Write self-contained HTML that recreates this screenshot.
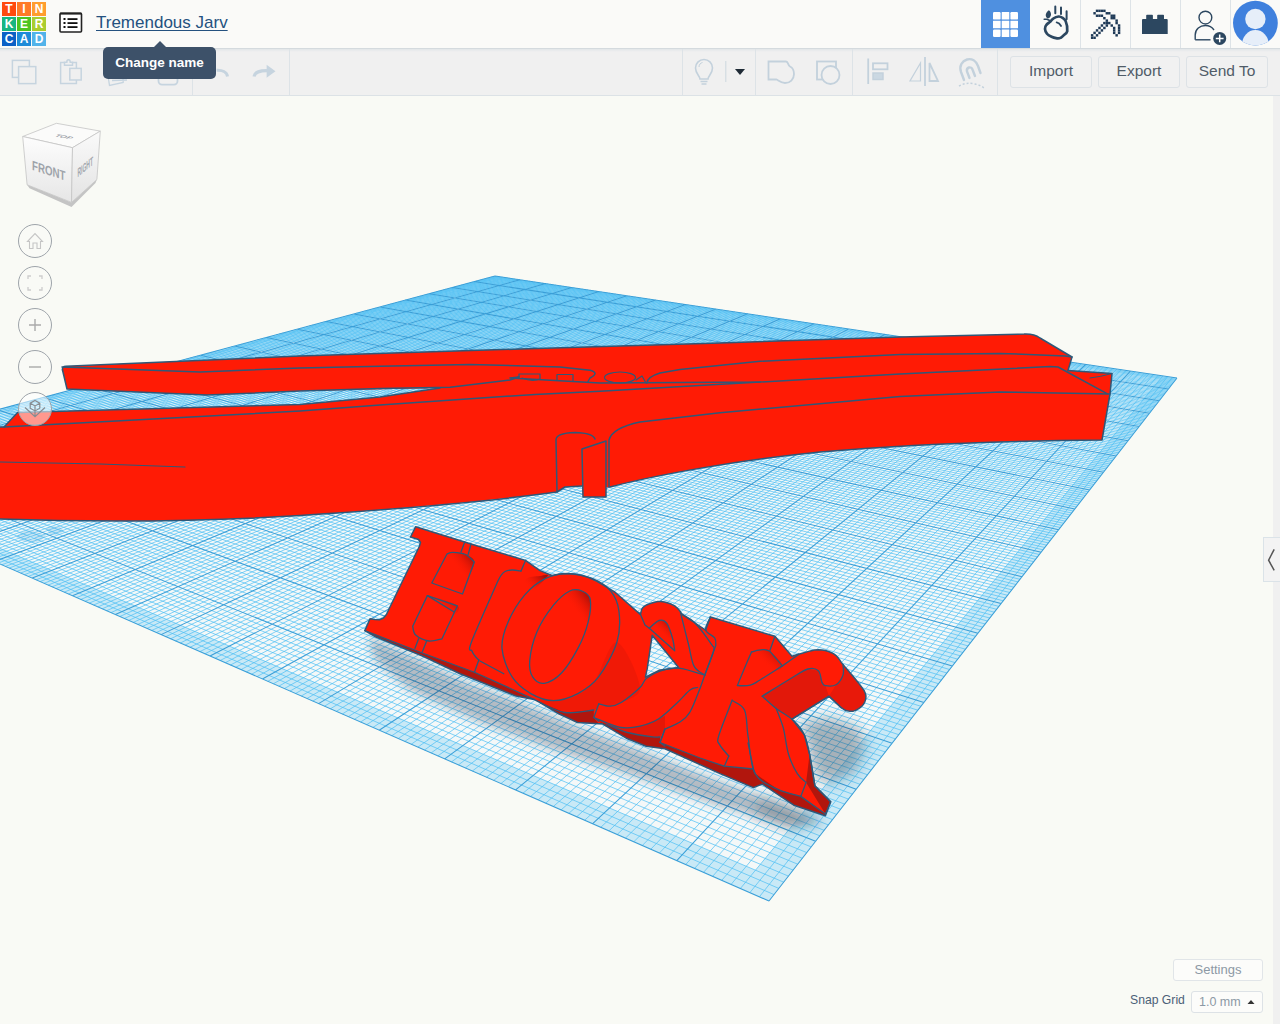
<!DOCTYPE html>
<html><head><meta charset="utf-8">
<style>
html,body{margin:0;padding:0;width:1280px;height:1024px;overflow:hidden;background:#f9faf5;font-family:"Liberation Sans",sans-serif;}
#scene{position:absolute;left:0;top:0;width:1280px;height:1024px;}
#hdr{position:absolute;left:0;top:0;width:1280px;height:48px;background:#fafaf8;border-bottom:1px solid #d4dade;}
#tb{position:absolute;left:0;top:49px;width:1280px;height:46px;background:#f0f0f0;border-bottom:1px solid #dce2e6;background-image:linear-gradient(#e2e6e9,#f0f0f0 3px);}
.tile{position:absolute;width:14px;height:14px;color:#fff;font-weight:bold;font-size:12px;line-height:14px;text-align:center;}
#title{position:absolute;left:96px;top:13px;font-size:17px;color:#24517f;text-decoration:underline;text-decoration-thickness:1px;text-underline-offset:2px;white-space:nowrap;}
.sep{position:absolute;top:49px;width:1px;height:46px;background:#dde3e7;}
.hsep{position:absolute;top:0;width:1px;height:48px;background:#dde3e7;}
.btn{position:absolute;top:56px;height:30px;border:1px solid #dde2e6;border-radius:3px;background:#f1f1f1;color:#505c68;font-size:15.5px;line-height:28px;text-align:center;}
#tip{position:absolute;left:103px;top:47px;width:113px;height:32px;background:#3d5169;border-radius:5px;color:#fff;font-weight:bold;font-size:13.5px;line-height:31px;text-align:center;}
#tiparrow{position:absolute;left:153px;top:41px;width:0;height:0;border-left:7px solid transparent;border-right:7px solid transparent;border-bottom:7px solid #3d5169;}
#strip{position:absolute;left:1273px;top:96px;width:7px;height:928px;background:#f0f0f0;}
#tab{position:absolute;left:1263px;top:537px;width:17px;height:45px;background:#f3f3f3;border:1px solid #dbe3e8;border-right:none;box-sizing:border-box;}
#settings{position:absolute;left:1173px;top:959px;width:88px;height:20px;border:1px solid #e1e5e8;border-radius:3px;background:#fcfcfa;color:#8c99a5;font-size:13px;line-height:20px;text-align:center;}
#snaplbl{position:absolute;left:1130px;top:993px;font-size:12.2px;color:#4b6077;}
#snap{position:absolute;left:1191px;top:991px;width:70px;height:20px;border:1px solid #dde2e6;border-radius:3px;background:#fcfcfa;color:#8c99a5;font-size:12.5px;line-height:20px;}
</style></head><body>
<svg id="scene" width="1280" height="1024" viewBox="0 0 1280 1024">
<defs><filter id="blur7" x="-30%" y="-30%" width="160%" height="160%"><feGaussianBlur stdDeviation="7"/></filter><filter id="blur5" x="-20%" y="-20%" width="140%" height="140%"><feGaussianBlur stdDeviation="5"/></filter></defs><polygon points="495.0,276.0 1177.0,378.0 769.0,901.0 -219.0,468.0" fill="#f4f8f8"/>
<path d="M495.0,276.0 L1177.0,378.0 L769.0,901.0 L-219.0,468.0 Z M496.2,278.8 L-192.9,466.3 L755.5,870.2 L1160.2,379.1 Z" fill="#c9e9f6" fill-rule="evenodd"/>
<path d="M497.5,276.4L-216.5,469.1M492.9,276.6L1176.2,379.1M499.9,276.7L-213.9,470.2M490.9,277.1L1175.3,380.1M502.4,277.1L-211.4,471.3M488.8,277.7L1174.5,381.2M504.9,277.5L-208.8,472.5M486.7,278.2L1173.6,382.3M507.4,277.8L-206.2,473.6M484.6,278.8L1172.8,383.4M509.8,278.2L-203.6,474.7M482.5,279.4L1171.9,384.5M512.3,278.6L-201.0,475.9M480.4,279.9L1171.0,385.6M514.8,279.0L-198.4,477.0M478.3,280.5L1170.2,386.8M517.4,279.3L-195.7,478.2M476.2,281.1L1169.3,387.9M522.4,280.1L-190.4,480.5M471.9,282.2L1167.5,390.1M524.9,280.5L-187.8,481.7M469.7,282.8L1166.6,391.3M527.5,280.9L-185.1,482.9M467.6,283.4L1165.7,392.4M530.0,281.2L-182.4,484.1M465.4,284.0L1164.8,393.6M532.6,281.6L-179.6,485.2M463.2,284.5L1163.9,394.8M535.2,282.0L-176.9,486.4M461.0,285.1L1163.0,395.9M537.7,282.4L-174.2,487.6M458.8,285.7L1162.1,397.1M540.3,282.8L-171.4,488.9M456.6,286.3L1161.2,398.3M542.9,283.2L-168.6,490.1M454.4,286.9L1160.2,399.5M548.1,283.9L-163.1,492.5M449.9,288.1L1158.3,401.9M550.7,284.3L-160.2,493.8M447.7,288.7L1157.4,403.1M553.3,284.7L-157.4,495.0M445.4,289.3L1156.4,404.4M555.9,285.1L-154.6,496.2M443.1,289.9L1155.5,405.6M558.6,285.5L-151.7,497.5M440.9,290.6L1154.5,406.8M561.2,285.9L-148.8,498.8M438.6,291.2L1153.5,408.1M563.8,286.3L-145.9,500.0M436.3,291.8L1152.5,409.3M566.5,286.7L-143.0,501.3M433.9,292.4L1151.6,410.6M569.2,287.1L-140.1,502.6M431.6,293.0L1150.6,411.9M574.5,287.9L-134.2,505.1M426.9,294.3L1148.6,414.5M577.2,288.3L-131.3,506.4M424.6,294.9L1147.5,415.8M579.9,288.7L-128.3,507.8M422.2,295.6L1146.5,417.1M582.6,289.1L-125.3,509.1M419.8,296.2L1145.5,418.4M585.3,289.5L-122.3,510.4M417.4,296.9L1144.5,419.7M588.0,289.9L-119.2,511.7M415.1,297.5L1143.4,421.0M590.7,290.3L-116.2,513.1M412.6,298.1L1142.4,422.4M593.5,290.7L-113.1,514.4M410.2,298.8L1141.3,423.7M596.2,291.1L-110.1,515.7M407.8,299.5L1140.3,425.1M601.7,292.0L-103.9,518.5M402.9,300.8L1138.1,427.8M604.5,292.4L-100.7,519.8M400.4,301.4L1137.0,429.2M607.3,292.8L-97.6,521.2M397.9,302.1L1135.9,430.6M610.0,293.2L-94.4,522.6M395.4,302.8L1134.8,432.0M612.8,293.6L-91.2,524.0M392.9,303.4L1133.7,433.4M615.6,294.0L-88.0,525.4M390.4,304.1L1132.6,434.9M618.4,294.5L-84.8,526.8M387.9,304.8L1131.5,436.3M621.3,294.9L-81.6,528.2M385.4,305.5L1130.4,437.8M624.1,295.3L-78.3,529.7M382.8,306.2L1129.2,439.2M629.8,296.2L-71.8,532.5M377.7,307.5L1127.0,442.2M632.6,296.6L-68.5,534.0M375.1,308.2L1125.8,443.6M635.5,297.0L-65.1,535.4M372.5,308.9L1124.6,445.1M638.3,297.4L-61.8,536.9M369.9,309.6L1123.4,446.6M641.2,297.9L-58.4,538.4M367.3,310.3L1122.3,448.2M644.1,298.3L-55.1,539.9M364.6,311.1L1121.1,449.7M647.0,298.7L-51.6,541.3M362.0,311.8L1119.9,451.2M649.9,299.2L-48.2,542.8M359.3,312.5L1118.7,452.8M652.8,299.6L-44.8,544.3M356.6,313.2L1117.4,454.3M658.7,300.5L-37.8,547.4M351.2,314.7L1115.0,457.5M661.6,300.9L-34.3,548.9M348.5,315.4L1113.7,459.1M664.5,301.4L-30.8,550.5M345.8,316.1L1112.5,460.7M667.5,301.8L-27.3,552.0M343.1,316.9L1111.2,462.3M670.5,302.2L-23.7,553.6M340.3,317.6L1109.9,464.0M673.4,302.7L-20.1,555.1M337.5,318.3L1108.7,465.6M676.4,303.1L-16.5,556.7M334.8,319.1L1107.4,467.3M679.4,303.6L-12.9,558.3M332.0,319.8L1106.1,468.9M682.4,304.0L-9.3,559.9M329.2,320.6L1104.8,470.6M688.5,304.9L-1.9,563.1M323.5,322.1L1102.1,474.0M691.5,305.4L1.8,564.8M320.6,322.9L1100.8,475.7M694.5,305.8L5.5,566.4M317.8,323.7L1099.4,477.4M697.6,306.3L9.3,568.0M314.9,324.4L1098.1,479.2M700.6,306.8L13.0,569.7M312.0,325.2L1096.7,480.9M703.7,307.2L16.8,571.4M309.1,326.0L1095.3,482.7M706.8,307.7L20.7,573.0M306.2,326.8L1093.9,484.5M709.9,308.1L24.5,574.7M303.2,327.6L1092.5,486.3M713.0,308.6L28.4,576.4M300.3,328.4L1091.1,488.1M719.2,309.5L36.2,579.8M294.3,330.0L1088.2,491.8M722.3,310.0L40.1,581.6M291.3,330.8L1086.8,493.6M725.5,310.5L44.1,583.3M288.3,331.6L1085.3,495.5M728.6,310.9L48.1,585.1M285.2,332.4L1083.9,497.4M731.8,311.4L52.1,586.8M282.2,333.2L1082.4,499.3M734.9,311.9L56.1,588.6M279.1,334.0L1080.9,501.2M738.1,312.4L60.2,590.4M276.1,334.9L1079.4,503.1M741.3,312.8L64.3,592.1M273.0,335.7L1077.9,505.1M744.5,313.3L68.4,594.0M269.8,336.5L1076.3,507.0M750.9,314.3L76.7,597.6M263.6,338.2L1073.2,511.0M754.1,314.8L80.9,599.4M260.4,339.1L1071.7,513.0M757.4,315.2L85.1,601.3M257.2,339.9L1070.1,515.0M760.6,315.7L89.3,603.1M254.0,340.8L1068.5,517.1M763.9,316.2L93.6,605.0M250.8,341.7L1066.9,519.1M767.2,316.7L97.9,606.9M247.6,342.5L1065.3,521.2M770.5,317.2L102.2,608.8M244.3,343.4L1063.7,523.3M773.7,317.7L106.6,610.7M241.1,344.3L1062.0,525.4M777.0,318.2L111.0,612.6M237.8,345.2L1060.3,527.5M783.7,319.2L119.8,616.5M231.2,346.9L1057.0,531.8M787.0,319.7L124.3,618.5M227.8,347.8L1055.3,534.0M790.4,320.2L128.8,620.4M224.5,348.7L1053.6,536.2M793.7,320.7L133.3,622.4M221.1,349.6L1051.8,538.4M797.1,321.2L137.9,624.4M217.7,350.6L1050.1,540.7M800.5,321.7L142.5,626.4M214.3,351.5L1048.3,542.9M803.9,322.2L147.1,628.4M210.9,352.4L1046.6,545.2M807.3,322.7L151.7,630.5M207.4,353.3L1044.8,547.5M810.7,323.2L156.4,632.5M204.0,354.3L1043.0,549.8M817.5,324.2L165.8,636.7M197.0,356.1L1039.3,554.5M821.0,324.8L170.6,638.8M193.5,357.1L1037.4,556.9M824.4,325.3L175.4,640.9M189.9,358.0L1035.6,559.3M827.9,325.8L180.3,643.0M186.3,359.0L1033.7,561.7M831.4,326.3L185.1,645.1M182.8,360.0L1031.8,564.2M834.9,326.8L190.0,647.3M179.2,360.9L1029.9,566.6M838.4,327.4L195.0,649.4M175.5,361.9L1027.9,569.1M841.9,327.9L199.9,651.6M171.9,362.9L1026.0,571.6M845.4,328.4L204.9,653.8M168.2,363.9L1024.0,574.1M852.5,329.5L215.1,658.2M160.8,365.9L1020.0,579.3M856.1,330.0L220.2,660.5M157.1,366.9L1017.9,581.9M859.7,330.5L225.3,662.7M153.3,367.9L1015.9,584.5M863.3,331.1L230.5,665.0M149.6,368.9L1013.8,587.2M866.9,331.6L235.7,667.3M145.8,369.9L1011.7,589.8M870.5,332.2L241.0,669.6M142.0,370.9L1009.6,592.5M874.1,332.7L246.3,671.9M138.1,372.0L1007.5,595.3M877.7,333.2L251.6,674.2M134.3,373.0L1005.4,598.0M881.4,333.8L257.0,676.6M130.4,374.1L1003.2,600.8M888.7,334.9L267.8,681.3M122.5,376.2L998.8,606.4M892.4,335.4L273.3,683.8M118.6,377.2L996.6,609.3M896.1,336.0L278.8,686.2M114.6,378.3L994.3,612.2M899.8,336.5L284.4,688.6M110.6,379.4L992.0,615.1M903.6,337.1L290.0,691.1M106.6,380.5L989.7,618.0M907.3,337.7L295.6,693.5M102.5,381.5L987.4,621.0M911.1,338.2L301.3,696.0M98.5,382.6L985.1,624.0M914.8,338.8L307.0,698.5M94.4,383.7L982.7,627.1M918.6,339.4L312.8,701.1M90.2,384.8L980.3,630.1M926.2,340.5L324.5,706.2M81.9,387.1L975.5,636.3M930.0,341.1L330.4,708.8M77.7,388.2L973.0,639.5M933.9,341.6L336.3,711.4M73.5,389.3L970.5,642.7M937.7,342.2L342.3,714.0M69.2,390.5L968.0,645.9M941.6,342.8L348.4,716.6M65.0,391.6L965.4,649.2M945.4,343.4L354.4,719.3M60.7,392.8L962.9,652.5M949.3,343.9L360.6,722.0M56.3,394.0L960.3,655.8M953.2,344.5L366.7,724.7M52.0,395.1L957.7,659.2M957.1,345.1L373.0,727.4M47.6,396.3L955.0,662.6M965.0,346.3L385.5,732.9M38.7,398.7L949.6,669.5M969.0,346.9L391.9,735.7M34.3,399.9L946.9,673.0M972.9,347.5L398.3,738.5M29.8,401.1L944.1,676.5M976.9,348.1L404.8,741.4M25.3,402.3L941.3,680.1M980.9,348.7L411.3,744.2M20.7,403.5L938.5,683.7M984.9,349.3L417.9,747.1M16.1,404.8L935.7,687.4M989.0,349.9L424.5,750.0M11.5,406.0L932.8,691.1M993.0,350.5L431.2,752.9M6.9,407.3L929.8,694.8M997.1,351.1L437.9,755.9M2.2,408.5L926.9,698.6M1005.2,352.3L451.5,761.9M-7.2,411.0L920.9,706.3M1009.3,352.9L458.4,764.9M-12.0,412.3L917.8,710.2M1013.4,353.5L465.4,767.9M-16.8,413.6L914.7,714.2M1017.6,354.2L472.4,771.0M-21.6,414.9L911.6,718.2M1021.7,354.8L479.4,774.1M-26.4,416.2L908.5,722.2M1025.9,355.4L486.5,777.2M-31.3,417.5L905.3,726.3M1030.0,356.0L493.7,780.4M-36.2,418.9L902.0,730.5M1034.2,356.6L501.0,783.5M-41.2,420.2L898.8,734.7M1038.4,357.3L508.2,786.7M-46.2,421.5L895.4,738.9M1046.9,358.5L523.0,793.2M-56.3,424.2L888.7,747.6M1051.2,359.2L530.5,796.5M-61.3,425.6L885.3,752.0M1055.4,359.8L538.1,799.8M-66.5,427.0L881.8,756.4M1059.7,360.5L545.7,803.1M-71.6,428.4L878.3,760.9M1064.0,361.1L553.3,806.5M-76.8,429.8L874.7,765.5M1068.3,361.7L561.1,809.9M-82.0,431.2L871.1,770.1M1072.7,362.4L568.9,813.3M-87.3,432.6L867.5,774.8M1077.0,363.0L576.8,816.7M-92.6,434.0L863.8,779.5M1081.4,363.7L584.7,820.2M-97.9,435.4L860.0,784.3M1090.2,365.0L600.8,827.3M-108.7,438.3L852.4,794.1M1094.6,365.7L608.9,830.9M-114.1,439.8L848.5,799.1M1099.0,366.3L617.2,834.5M-119.6,441.3L844.6,804.1M1103.5,367.0L625.5,838.1M-125.1,442.8L840.6,809.2M1107.9,367.7L633.8,841.8M-130.7,444.3L836.6,814.4M1112.4,368.3L642.3,845.5M-136.3,445.8L832.5,819.6M1116.9,369.0L650.8,849.2M-141.9,447.3L828.3,824.9M1121.4,369.7L659.4,853.0M-147.6,448.8L824.1,830.3M1126.0,370.4L668.1,856.8M-153.3,450.3L819.9,835.8M1135.1,371.7L685.7,864.5M-164.9,453.4L811.2,846.9M1139.7,372.4L694.6,868.4M-170.7,455.0L806.8,852.6M1144.3,373.1L703.6,872.3M-176.6,456.6L802.3,858.3M1148.9,373.8L712.7,876.3M-182.5,458.2L797.7,864.2M1153.5,374.5L721.8,880.3M-188.5,459.8L793.1,870.1M1158.2,375.2L731.1,884.4M-194.5,461.4L788.4,876.1M1162.9,375.9L740.4,888.5M-200.6,463.0L783.7,882.2M1167.6,376.6L749.9,892.6M-206.7,464.7L778.8,888.4M1172.3,377.3L759.4,896.8M-212.8,466.3L774.0,894.6" stroke="#4cbff4" stroke-width="0.7" fill="none"/>
<path d="M495.0,276.0L-219.0,468.0M495.0,276.0L1177.0,378.0M519.9,279.7L-193.1,479.4M474.0,281.6L1168.4,389.0M545.5,283.6L-165.9,491.3M452.2,287.5L1159.3,400.7M571.8,287.5L-137.2,503.9M429.3,293.7L1149.6,413.2M599.0,291.5L-107.0,517.1M405.3,300.1L1139.2,426.5M626.9,295.7L-75.1,531.1M380.3,306.9L1128.1,440.7M655.7,300.0L-41.3,545.9M353.9,313.9L1116.2,455.9M685.4,304.5L-5.6,561.5M326.3,321.4L1103.4,472.3M716.1,309.1L32.3,578.1M297.3,329.2L1089.7,489.9M747.7,313.8L72.5,595.8M266.7,337.4L1074.8,509.0M780.4,318.7L115.4,614.5M234.5,346.1L1058.7,529.7M814.1,323.7L161.1,634.6M200.5,355.2L1041.1,552.2M849.0,328.9L210.0,656.0M164.5,364.9L1022.0,576.7M885.1,334.3L262.4,679.0M126.5,375.1L1001.0,603.6M922.4,339.9L318.6,703.6M86.1,386.0L977.9,633.2M961.1,345.7L379.2,730.2M43.2,397.5L952.3,666.0M1001.1,351.7L444.7,758.9M-2.5,409.8L923.9,702.4M1042.7,357.9L515.6,789.9M-51.2,422.9L892.1,743.2M1085.8,364.4L592.7,823.7M-103.3,436.9L856.2,789.2M1130.5,371.0L676.8,860.6M-159.1,451.9L815.6,841.3M1177.0,378.0L769.0,901.0M-219.0,468.0L769.0,901.0" stroke="#3a9fd8" stroke-width="1.05" fill="none"/>
<g id="plane-logo" fill="#3aa2de" opacity="0.22"><path d="M16,537 Q20,531 30,530 L46,535 Q43,541 33,543 L22,541 Z M27,535.5 L36,537.5 L32,539.5 Z" fill-rule="evenodd"/><path d="M46,528 Q52,525 60,527 L64,531 Q58,536 50,535 Z"/></g>
<!-- clothespin -->
<g id="pin">
<path d="M62.5,370 Q62,366.5 66,366.3 L300,356 L520,349 L720,343 L900,337 L1024,334 Q1034,333.5 1040,338 L1072,357 L1068,370.5 L1112,373.5 L1110,394 L1102,440 C1000,441 900,445 820,452 C740,460 660,474 610,487 L606,487.5 L606,497 L583,497 L582,486 L565,487 L557,492 C500,500 400,509 300,515.5 C220,520.5 120,523 0,519 L0,427 L4,427 L17.6,412.5 L300,404.5 L380,397 L440,388 L300,391 L207,395 L67,389 Z" fill="#ff1b05"/>
<g fill="none" stroke="#2f5878" stroke-width="1.5" stroke-linejoin="round" stroke-linecap="round">
<path d="M62.5,370 Q62,366.5 66,366.3 L300,356 L520,349 L720,343 L900,337 L1024,334 Q1034,333.5 1040,338 L1072,357 L1068,370.5"/>
<path d="M1068,370.5 L1112,373.5 L1110,394 L1102,440 C1000,441 900,445 820,452 C740,460 660,474 610,487"/>
<path d="M606,441 L606,497 L583,497 L582,449 Z"/>
<path d="M582,486 L565,487 L557,492 C500,500 400,509 300,515.5 C220,520.5 120,523 0,519"/>
<path d="M0,427 L4,427 L17.6,412.5 L300,404.5 L380,397 L440,388"/>
<path d="M62.5,370 L67,389 L207,395 L300,391 L380,388.5 L450,387.3 L510,380 L519,377"/>
<path d="M62,367 L200,372 L300,368 L380,366.2 L470,364.5 L560,367 L590,370.3 Q600,373 590,378 L588,381.5"/>
<path d="M647,383 Q647,377 660,373 L680,369.4 L760,361.3 L900,354.4 L1000,353.4 L1065,356 L1072,357"/>
<path d="M519,377 L510,378 L600,383 L760,382 L900,374 L1050,366.6 L1058,367 L1107,393.6"/>
<path d="M4,427 L300,411 L380,405 L535,394.4 L600,391.25 L760,382"/>
<path d="M609,487 L609,440 Q612,428 640,422 L720,412.8 L900,396.6 L1000,392 L1110,394"/>
<path d="M557,492 L556,440 Q556,433 575,432.5 Q593,433 595,439"/>
<path d="M0,462 L100,464 L185,467" stroke-width="1.2"/>
<path d="M519,377 L519,374 L540,374 L540,379 Q532,382 522,378 M557,380 L557,374.5 L573,374.5 L573,381" stroke-width="1.2"/>
<ellipse cx="620" cy="377.5" rx="15.5" ry="5.5" stroke-width="1.2"/>
<path d="M636,380 L642,376 L646,383" stroke-width="1.2"/>
<path d="M1112,373.5 Q1100,377 1090,378" stroke-width="1"/>
</g>
</g>
<g filter="url(#blur5)" fill="#1e2e44">
<path opacity="0.30" d="M368,636 L420,660 L470,684 L520,702 L580,728 L640,750 L700,774 L760,796 L822,822 L790,826 L720,806 L640,778 L560,752 L480,722 L410,690 L375,660 Z"/>
</g>
<g filter="url(#blur7)" fill="#1e2e44">
<path opacity="0.36" d="M800,722 L830,718 L858,728 L866,745 L855,772 L828,784 L814,772 L808,745 Z"/>
<path opacity="0.22" d="M760,795 L800,805 L822,822 L790,830 L755,815 Z"/>
</g>
<path d="M415.7,526.7 L464.7,542.0 L471.0,544.0 L525.5,560.4 L540.0,570.6 L552.0,575.5 L554.7,575.0 L558.5,574.3 L562.9,573.7 L567.7,573.6 L572.8,574.0 L578.3,574.8 L584.1,576.1 L590.0,578.0 L596.6,581.2 L603.8,585.3 L610.3,589.3 L614.8,592.0 L640.5,614.6 L640.7,613.4 L641.1,611.6 L641.6,609.6 L642.5,608.0 L643.7,606.8 L645.3,605.7 L647.1,604.7 L649.3,603.9 L651.8,603.0 L654.7,602.2 L657.8,601.6 L661.0,601.5 L664.4,602.0 L668.1,603.0 L671.6,604.3 L674.7,605.9 L677.2,608.0 L679.5,610.5 L681.2,612.9 L682.5,614.6 L695.0,623.0 L706.0,630.3 L705.6,629.9 L710.4,617.0 L774.9,636.3 L792.0,656.2 L792.8,656.0 L793.7,655.6 L795.0,655.2 L796.8,654.7 L799.1,654.1 L802.2,653.2 L806.1,652.1 L810.3,650.9 L814.6,650.1 L818.4,649.7 L821.9,649.9 L825.3,650.5 L828.6,651.5 L831.5,652.7 L834.2,654.1 L836.4,655.8 L838.2,657.9 L839.8,660.1 L841.3,662.4 L843.0,664.6 L844.8,666.7 L846.6,668.8 L848.4,670.8 L850.2,672.9 L852.0,675.0 L853.8,677.2 L855.7,679.5 L857.5,681.8 L859.2,683.9 L860.6,685.7 L861.7,687.2 L862.6,688.4 L863.3,689.4 L864.0,690.4 L864.5,691.5 L865.0,692.6 L865.4,693.7 L865.7,694.7 L865.9,695.8 L865.9,697.0 L865.8,698.3 L865.5,699.6 L865.1,701.0 L864.6,702.3 L864.0,703.5 L863.2,704.6 L862.3,705.7 L861.3,706.7 L860.1,707.7 L859.0,708.5 L857.8,709.2 L856.5,709.9 L855.2,710.5 L853.8,710.9 L852.5,711.2 L851.2,711.3 L849.8,711.3 L848.5,711.1 L847.2,710.8 L846.0,710.5 L844.9,710.0 L843.8,709.4 L842.8,708.7 L841.9,708.1 L841.3,707.7 L829.0,696.2 L792.0,719.1 L804.4,734.9 L809.6,754.2 L814.9,785.9 L830.7,801.7 L825.4,815.7 L793.8,805.2 L762.2,784.1 L753.4,787.6 L720.0,773.6 L665.0,748.8 L646.2,746.2 L627.5,738.8 L602.5,723.8 L598.8,723.8 L577.5,722.5 L558.8,713.8 L540.0,702.5 L534.0,699.4 L516.0,696.0 L460.0,673.8 L422.5,656.0 L376.0,637.0 L364.8,630.6 L370.0,618.8 L375.0,619.6 L379.5,619.8 L383.5,618.0 L386.6,614.2 L389.0,609.0 L419.3,546.5 L420.5,542.5 L418.5,539.5 L414.5,538.2 L410.5,537.0 Z M652.2,635.2 L678.6,667.4 L659.0,670.3 L645.4,677.1 L647.3,668.4 Z" fill="#ff1b05" fill-rule="evenodd"/>
<defs>
<linearGradient id="shTR" x1="0.9" y1="0.1" x2="0.35" y2="0.55"><stop offset="0" stop-color="#a80f08"/><stop offset="1" stop-color="#ff1b05" stop-opacity="0"/></linearGradient>
<linearGradient id="shB" x1="0" y1="0" x2="0" y2="1"><stop offset="0" stop-color="#ff1b05" stop-opacity="0"/><stop offset="1" stop-color="#c0150c"/></linearGradient>
<linearGradient id="shArm" x1="0.2" y1="0.2" x2="0.9" y2="0.9"><stop offset="0" stop-color="#d8160a"/><stop offset="1" stop-color="#ee1a08"/></linearGradient>
</defs>
<path d="M447.0,554.0 C446.7,550.7 449.9,552.3 453.0,552.4 C456.1,552.5 461.9,552.9 465.5,554.5 C469.1,556.1 474.2,557.8 474.3,562.0 C474.4,566.2 469.2,578.3 466.0,580.0 C462.8,581.7 458.2,576.3 455.0,572.0 C451.8,567.7 447.3,557.3 447.0,554.0 Z" fill="url(#shTR)"/>
<path d="M427.4,595.6 C430.3,595.6 453.1,602.6 457.4,605.8 C461.7,609.0 455.9,615.0 453.0,615.0 C450.1,615.0 444.3,609.2 440.0,606.0 C435.7,602.8 424.5,595.6 427.4,595.6 Z" fill="url(#shTR)"/>
<path d="M525.0,580.0 C528.3,576.0 536.3,576.5 540.0,576.0 C543.7,575.5 550.3,573.0 547.0,577.0 C543.7,581.0 523.7,599.5 520.0,600.0 C516.3,600.5 521.7,584.0 525.0,580.0 Z" fill="url(#shTR)"/>
<path d="M569.7,591.0 C573.0,589.5 578.6,589.6 582.0,591.0 C585.4,592.4 589.2,594.1 590.2,599.2 C591.2,604.3 590.7,619.7 588.2,621.8 C585.7,623.9 579.4,615.6 575.0,612.0 C570.6,608.4 562.9,603.5 562.0,600.0 C561.1,596.5 566.4,592.5 569.7,591.0 Z" fill="url(#shTR)"/>
<path d="M752.3,651.9 C753.1,649.5 760.1,649.9 763.0,649.7 C765.9,649.5 766.3,648.1 769.5,650.8 C772.7,653.5 782.3,662.2 782.4,665.9 C782.5,669.6 774.1,673.3 770.0,673.0 C765.9,672.7 761.0,667.5 758.0,664.0 C755.0,660.5 751.5,654.3 752.3,651.9 Z" fill="url(#shTR)"/>
<path d="M649.3,628.3 C649.1,626.2 656.1,621.3 659.0,620.5 C661.9,619.7 664.6,620.3 666.9,623.4 C669.2,626.5 673.9,637.4 672.7,639.0 C671.6,640.6 663.9,634.8 660.0,633.0 C656.1,631.2 649.5,630.4 649.3,628.3 Z" fill="url(#shTR)"/>
<path d="M762.2,696.2 L790.3,678.7 L807.9,669.0 L818.4,670.8 L822.0,682.2 L825.4,685.7 L829.0,696.2 L792.0,719.1 L776.2,708.5 Z" fill="#e2180a"/>
<path d="M829.0,696.2 L836.0,684.8 L843.0,675.1 L843.0,664.6 L852.0,675.0 L860.6,685.7 L864.5,691.5 L865.9,697.0 L864.0,703.5 L859.0,708.5 L852.5,711.2 L846.0,710.5 L841.3,707.7 Z" fill="#e8190a"/>
<path d="M540.0,698.8 C543.5,698.3 554.8,700.6 561.0,700.0 C567.2,699.4 571.8,698.3 577.5,695.0 C583.2,691.7 588.4,688.8 595.0,680.0 C601.6,671.2 609.4,641.0 616.9,642.3 C624.4,643.5 639.3,677.5 640.0,687.5 C640.7,697.5 626.2,699.4 621.2,702.5 C616.2,705.6 613.8,706.0 610.0,706.2 C606.2,706.5 601.5,703.1 598.8,703.8 C596.0,704.4 599.4,708.5 593.8,710.0 C588.1,711.5 574.0,713.8 565.0,712.5 C556.0,711.2 544.2,704.8 540.0,702.5 C535.8,700.2 536.5,699.2 540.0,698.8 Z" fill="#d41608" opacity="0.35"/>
<path d="M593.8,717.5 L606.2,722.5 L621.2,727.5 L640.0,726.2 L658.8,718.8 L665.0,716.0 L665.0,728.8 L660.0,736.9 L652.5,736.9 L627.5,732.5 L606.0,724.0 L598.8,721.2 Z" fill="#d41608" opacity="0.6"/>
<path d="M364.8,630.6 L421.0,652.5 L475.0,672.5 L516.0,691.0 L534.0,699.4 L516.0,696.0 L460.0,673.8 L422.5,656.0 L376.0,637.0 Z" fill="#8c1512" opacity="0.68"/>
<path d="M534.0,699.4 L540.0,702.5 L565.0,712.5 L593.8,710.0 L593.8,717.5 L598.8,723.8 L577.5,722.5 L558.8,713.8 L540.0,702.5 Z" fill="#8c1512" opacity="0.68"/>
<path d="M598.8,721.2 L606.0,724.0 L627.5,732.5 L652.5,736.9 L660.0,736.9 L660.0,742.5 L665.0,748.8 L646.2,746.2 L627.5,738.8 L602.5,723.8 Z" fill="#8c1512" opacity="0.68"/>
<path d="M660.0,742.5 L700.0,758.0 L724.3,766.2 L753.4,769.0 L755.1,773.6 L762.2,784.1 L753.4,787.6 L720.0,773.6 L665.0,748.8 Z" fill="#8c1512" opacity="0.68"/>
<path d="M755.1,773.6 L778.0,789.4 L800.8,796.4 L825.4,814.0 L825.4,815.7 L793.8,805.2 L762.2,784.1 Z" fill="#8c1512" opacity="0.68"/>
<path d="M809.6,754.2 L814.9,785.9 L830.7,801.7 L825.4,814.0 L806.1,782.4 Z" fill="#8c1512" opacity="0.68"/>
<g fill="none" stroke="#2f5878" stroke-width="1.3" stroke-linejoin="round" stroke-linecap="round">
<path d="M415.7,526.7 L464.7,542.0 L471.0,544.0 L525.5,560.4 L540.0,570.6 L552.0,575.5 L554.7,575.0 L558.5,574.3 L562.9,573.7 L567.7,573.6 L572.8,574.0 L578.3,574.8 L584.1,576.1 L590.0,578.0 L596.6,581.2 L603.8,585.3 L610.3,589.3 L614.8,592.0 L640.5,614.6 L640.7,613.4 L641.1,611.6 L641.6,609.6 L642.5,608.0 L643.7,606.8 L645.3,605.7 L647.1,604.7 L649.3,603.9 L651.8,603.0 L654.7,602.2 L657.8,601.6 L661.0,601.5 L664.4,602.0 L668.1,603.0 L671.6,604.3 L674.7,605.9 L677.2,608.0 L679.5,610.5 L681.2,612.9 L682.5,614.6 L695.0,623.0 L706.0,630.3 L705.6,629.9 L710.4,617.0 L774.9,636.3 L792.0,656.2 L792.8,656.0 L793.7,655.6 L795.0,655.2 L796.8,654.7 L799.1,654.1 L802.2,653.2 L806.1,652.1 L810.3,650.9 L814.6,650.1 L818.4,649.7 L821.9,649.9 L825.3,650.5 L828.6,651.5 L831.5,652.7 L834.2,654.1 L836.4,655.8 L838.2,657.9 L839.8,660.1 L841.3,662.4 L843.0,664.6 L844.8,666.7 L846.6,668.8 L848.4,670.8 L850.2,672.9 L852.0,675.0 L853.8,677.2 L855.7,679.5 L857.5,681.8 L859.2,683.9 L860.6,685.7 L861.7,687.2 L862.6,688.4 L863.3,689.4 L864.0,690.4 L864.5,691.5 L865.0,692.6 L865.4,693.7 L865.7,694.7 L865.9,695.8 L865.9,697.0 L865.8,698.3 L865.5,699.6 L865.1,701.0 L864.6,702.3 L864.0,703.5 L863.2,704.6 L862.3,705.7 L861.3,706.7 L860.1,707.7 L859.0,708.5 L857.8,709.2 L856.5,709.9 L855.2,710.5 L853.8,710.9 L852.5,711.2 L851.2,711.3 L849.8,711.3 L848.5,711.1 L847.2,710.8 L846.0,710.5 L844.9,710.0 L843.8,709.4 L842.8,708.7 L841.9,708.1 L841.3,707.7 L829.0,696.2 L792.0,719.1 L804.4,734.9 L809.6,754.2 L814.9,785.9 L830.7,801.7 L825.4,815.7 L793.8,805.2 L762.2,784.1 L753.4,787.6 L720.0,773.6 L665.0,748.8 L646.2,746.2 L627.5,738.8 L602.5,723.8 L598.8,723.8 L577.5,722.5 L558.8,713.8 L540.0,702.5 L534.0,699.4 L516.0,696.0 L460.0,673.8 L422.5,656.0 L376.0,637.0 L364.8,630.6 L370.0,618.8 L375.0,619.6 L379.5,619.8 L383.5,618.0 L386.6,614.2 L389.0,609.0 L419.3,546.5 L420.5,542.5 L418.5,539.5 L414.5,538.2 L410.5,537.0 Z M652.2,635.2 L678.6,667.4 L659.0,670.3 L645.4,677.1 L647.3,668.4 Z" stroke-width="1.5"/>
<path d="M447.0,554.0 C448.0,553.7 449.9,552.3 453.0,552.4 C456.1,552.5 461.9,552.9 465.5,554.5 C469.1,556.1 472.8,560.8 474.3,562.0 L462.5,594.0 L431.8,583.0 L447.0,554.0"/>
<path d="M464.7,542.0 L461.0,552.0"/>
<path d="M471.0,544.0 L468.0,555.0"/>
<path d="M427.4,595.6 L457.4,605.8 L442.0,638.8 M442.0,638.8 C439.8,639.2 433.2,641.6 428.8,641.0 C424.4,640.4 418.4,637.5 415.7,635.0 C413.0,632.5 413.2,627.8 412.7,626.3 L427.4,595.6"/>
<path d="M427.4,595.6 L453.7,611.7"/>
<path d="M418.6,638.8 L415.0,648.3"/>
<path d="M426.6,641.0 L422.3,652.0"/>
<path d="M525.5,560.4 L521.0,571.0"/>
<path d="M521.0,571.0 C519.5,570.8 514.7,569.9 512.0,570.0 C509.3,570.1 506.9,570.5 505.0,571.5 C503.1,572.5 501.9,574.1 500.6,576.0 C499.3,577.9 497.6,581.8 497.0,583.0 L497.0,583.0 C492.7,592.9 475.5,631.1 471.3,642.4 C467.1,653.7 471.4,648.7 472.0,651.0 C472.6,653.3 473.9,654.5 475.0,656.0 C476.1,657.5 478.1,659.3 478.8,660.0"/>
<path d="M478.8,660.0 L474.4,672.5"/>
<path d="M480.0,661.0 L503.8,673.8"/>
<path d="M364.8,630.6 L421.0,652.5 L475.0,672.5 L516.0,691.0 L534.0,699.4"/>
<path d="M567.7,573.6 C575.6,573.6 585.1,575.8 592.3,578.7 C599.5,581.6 606.2,585.5 610.7,591.0 C615.2,596.5 618.0,603.0 619.0,611.5 C620.0,620.0 620.3,631.3 616.9,642.3 C613.5,653.2 604.9,668.7 598.4,677.2 C591.9,685.8 585.4,689.7 577.9,693.6 C570.4,697.5 561.1,700.7 553.3,700.7 C545.4,700.7 537.6,697.5 530.8,693.6 C524.0,689.7 517.1,684.7 512.3,677.2 C507.5,669.7 502.7,657.6 502.0,648.4 C501.3,639.2 504.4,630.7 508.2,621.8 C512.0,612.9 518.5,602.3 524.6,595.1 C530.8,587.9 537.9,582.3 545.1,578.7 C552.3,575.1 559.8,573.6 567.7,573.6 Z"/>
<path d="M529.7,660.7 C530.4,653.2 533.0,641.2 536.9,632.0 C540.8,622.8 547.8,612.2 553.3,605.4 C558.8,598.6 564.9,593.4 569.7,591.0 C574.5,588.6 578.6,589.6 582.0,591.0 C585.4,592.4 589.2,594.1 590.2,599.2 C591.2,604.3 590.2,613.6 588.2,621.8 C586.2,630.0 582.4,639.9 577.9,648.4 C573.4,656.9 567.1,667.2 561.5,673.0 C555.9,678.8 548.9,682.6 544.1,683.3 C539.3,684.0 535.2,681.0 532.8,677.2 C530.4,673.4 529.0,668.2 529.7,660.7 Z"/>
<path d="M774.9,636.3 L770.0,650.3"/>
<path d="M710.4,617.0 C709.6,619.1 704.9,626.4 705.6,629.9 C706.3,633.4 713.0,635.3 714.7,637.9 C716.4,640.5 715.6,644.1 715.8,645.4 L715.8,645.4 C714.0,650.2 707.6,667.3 705.0,674.4 C702.4,681.5 702.7,681.6 700.2,687.9 C697.7,694.2 693.4,706.3 690.0,712.0 C686.6,717.7 684.2,719.2 680.0,722.0 C675.8,724.8 667.5,727.8 665.0,729.0 L660,742.5"/>
<path d="M682.5,614.6 C684.6,616.0 690.2,618.0 695.0,623.0 C699.8,628.0 708.4,639.8 711.5,644.4 C714.6,649.0 714.7,645.8 713.6,650.8 C712.5,655.8 706.4,670.5 705.0,674.4"/>
<path d="M680.5,612.7 C681.8,617.9 686.1,635.0 688.4,644.0 C690.7,653.0 691.4,661.2 694.2,666.4 C697.0,671.6 703.2,673.7 705.0,675.2"/>
<path d="M649.3,628.3 C650.9,627.0 656.1,621.3 659.0,620.5 C661.9,619.7 664.6,620.3 666.9,623.4 C669.2,626.5 671.4,634.4 672.7,639.0 C674.0,643.6 674.4,648.8 674.7,650.8 L649.3,628.3"/>
<path d="M640.5,614.6 L645.0,625.0 L649.3,628.3"/>
<path d="M598.8,703.8 C600.6,704.2 606.2,706.5 610.0,706.2 C613.8,706.0 616.2,705.6 621.2,702.5 C626.2,699.4 635.8,691.5 640.0,687.5 C644.2,683.5 642.8,681.2 646.6,678.3 C650.4,675.4 657.4,671.6 663.0,670.0 C668.6,668.4 673.3,667.5 680.3,668.4 C687.3,669.3 700.9,674.1 705.0,675.2"/>
<path d="M593.8,717.5 C595.8,718.3 601.7,720.8 606.2,722.5 C610.8,724.2 615.6,726.9 621.2,727.5 C626.9,728.1 633.8,727.7 640.0,726.2 C646.2,724.8 652.5,722.7 658.8,718.8 C665.0,714.8 672.3,707.3 677.5,702.5 C682.7,697.7 686.7,692.5 690.0,690.0 C693.3,687.5 696.2,687.9 697.5,687.5"/>
<path d="M598.8,703.8 L593.8,717.5 L598.8,721.2"/>
<path d="M540.0,702.5 C544.2,704.2 556.0,711.2 565.0,712.5 C574.0,713.8 589.0,710.4 593.8,710.0"/>
<path d="M606.0,724.0 C609.6,725.4 619.8,730.4 627.5,732.5 C635.2,734.6 647.1,736.2 652.5,736.9 C657.9,737.6 658.8,736.9 660.0,736.9"/>
<path d="M737.3,685.7 C739.4,680.6 747.7,660.7 750.2,655.1 C752.7,649.5 750.2,652.8 752.3,651.9 C754.4,651.0 760.1,649.9 763.0,649.7 C765.9,649.5 768.4,650.6 769.5,650.8 L782.4,665.9  L782.4,665.9 C778.7,668.2 765.4,676.8 760.0,680.0 C754.6,683.2 754.0,684.2 750.2,685.2 C746.4,686.2 739.4,685.6 737.3,685.7"/>
<path d="M782.4,665.9 C785.2,663.9 796.3,656.1 799.1,654.1"/>
<path d="M762.2,696.2 C766.9,693.3 782.7,683.2 790.3,678.7 C797.9,674.2 803.2,670.3 807.9,669.0 C812.6,667.7 816.0,668.6 818.4,670.8 C820.8,673.0 820.8,679.7 822.0,682.2 C823.2,684.7 823.1,685.3 825.4,685.7 C827.7,686.1 833.1,686.6 836.0,684.8 C838.9,683.0 841.8,678.5 843.0,675.1 C844.2,671.7 843.0,666.4 843.0,664.6"/>
<path d="M841.3,707.7 L829.0,696.2 L792.0,719.1"/>
<path d="M762.2,696.2 C764.5,698.2 770.9,704.4 776.2,708.5 C781.5,712.6 789.1,716.4 793.8,720.8 C798.5,725.2 801.8,729.3 804.4,734.9 C807.0,740.5 807.9,745.7 809.6,754.2 C811.4,762.7 814.0,780.6 814.9,785.9"/>
<path d="M814.9,785.9 L830.7,801.7 L825.4,814.0 L800.8,796.4"/>
<path d="M732.3,700.6 C734.3,702.2 742.0,704.3 744.6,710.3 C747.2,716.3 746.4,726.2 748.1,736.7 C749.9,747.2 750.1,764.8 755.1,773.6 C760.1,782.4 770.4,785.6 778.0,789.4 C785.6,793.2 797.0,795.2 800.8,796.4"/>
<path d="M776.2,708.5 C777.4,711.7 781.2,720.3 783.3,727.9 C785.3,735.5 786.2,746.6 788.5,754.2 C790.8,761.8 794.4,768.9 797.3,773.6 C800.2,778.3 804.6,780.9 806.1,782.4 L800.8,796.4"/>
<path d="M732.2,700.0 C730.0,706.0 720.8,728.4 718.7,735.9 C716.6,743.4 718.1,741.5 719.8,744.9 C721.5,748.3 727.3,754.2 728.8,756.1"/>
<path d="M728.8,756.1 L724.3,766.2"/>
<path d="M665.0,728.8 L660.0,742.5 L665.0,746.2"/>
<path d="M660.0,742.5 L700.0,758.0 L724.3,766.2 L753.4,769.0"/>
<path d="M748.1,743.0 L753.4,769.0 L755.1,773.6"/>
</g>
</svg>

<!-- view cube -->
<svg style="position:absolute;left:0;top:100px" width="120" height="120" viewBox="0 100 120 120">
<defs>
<linearGradient id="cf" x1="0" y1="0" x2="0" y2="1"><stop offset="0" stop-color="#fdfdfd"/><stop offset="1" stop-color="#e6e6e6"/></linearGradient>
<linearGradient id="cr" x1="0" y1="0" x2="0" y2="1"><stop offset="0" stop-color="#fafafa"/><stop offset="1" stop-color="#e3e3e3"/></linearGradient>
</defs>
<polygon points="27.1,184.8 29.5,188.3 71.5,207 95.5,183 96.9,179.5 71.5,202.4" fill="#c4c4c4"/>
<polygon points="22.7,136.5 56.4,123.3 100.3,131.1 72.5,147.7" fill="#fbfbfa" stroke="#c4c4c4" stroke-width="0.8"/>
<polygon points="22.7,136.5 72.5,147.7 71.5,202.4 27.1,184.8" fill="url(#cf)" stroke="#c4c4c4" stroke-width="0.8"/>
<polygon points="72.5,147.7 100.3,131.1 96.9,179.5 71.5,202.4" fill="url(#cr)" stroke="#c4c4c4" stroke-width="0.8"/>
<text x="0" y="0" font-family="Liberation Sans" font-weight="bold" font-size="13.3" fill="#9ea3aa" transform="translate(32,169.7) skewY(18) scale(0.73,1)">FRONT</text>
<text x="0" y="0" font-family="Liberation Sans" font-weight="bold" font-size="12.3" fill="#a3a8ae" transform="translate(77.4,177.5) skewY(-39.5) scale(0.41,1)">RIGHT</text>
<text x="0" y="0" font-family="Liberation Sans" font-weight="bold" font-size="10" fill="#9fa4aa" transform="translate(54,136.5) skewY(10) skewX(-50) scale(0.82,0.42)">TOP</text>
</svg>

<!-- nav buttons -->
<svg style="position:absolute;left:0;top:220px" width="70" height="210" viewBox="0 220 70 210">
<g fill="none" stroke="#9ea4aa" stroke-width="1">
<circle cx="35" cy="241" r="16.5" fill="#f9faf6"/>
<circle cx="35" cy="283" r="16.5" fill="#f9faf6"/>
<circle cx="35" cy="325" r="16.5" fill="#f9faf6"/>
<circle cx="35" cy="367" r="16.5" fill="#f9faf6"/>
<circle cx="35" cy="409" r="16.5" fill="rgba(255,255,255,0.55)"/>
</g>
<path d="M27.5,241.5 L35,233.5 L42.5,241.5 L40.5,241.5 L40.5,248.5 L37,248.5 L37,243 L33,243 L33,248.5 L29.5,248.5 L29.5,241.5 Z" fill="none" stroke="#c5c5c5" stroke-width="1.1"/>
<path d="M28,279 V276 H31 M39,276 H42 V279 M42,287 V290 H39 M31,290 H28 V287" fill="none" stroke="#cdcdcd" stroke-width="1.3"/>
<path d="M29,325 H41 M35,319 V331" stroke="#aaaaaa" stroke-width="1.4"/>
<path d="M29,367 H41" stroke="#aaaaaa" stroke-width="1.4"/>
<path d="M35,400.5 L39.8,403.2 L39.8,408.2 L35,410.9 L30.2,408.2 L30.2,403.2 Z M30.2,403.2 L35,405.9 L39.8,403.2 M35,405.9 V416.5 M25,407.5 L35,416.8 L45,407.5" fill="none" stroke="#868c92" stroke-width="1.2"/>
</svg>

<div id="hdr"></div>
<div class="tile" style="left:2px;top:2px;background:#ff4a0f">T</div>
<div class="tile" style="left:17px;top:2px;background:#ff7a26">I</div>
<div class="tile" style="left:32px;top:2px;background:#ff9d2e">N</div>
<div class="tile" style="left:2px;top:17px;background:#17b582">K</div>
<div class="tile" style="left:17px;top:17px;background:#4ec420">E</div>
<div class="tile" style="left:32px;top:17px;background:#aacd30">R</div>
<div class="tile" style="left:2px;top:32px;background:#0b60c6">C</div>
<div class="tile" style="left:17px;top:32px;background:#1e8bd8">A</div>
<div class="tile" style="left:32px;top:32px;background:#52b3ea">D</div>
<svg style="position:absolute;left:58px;top:11px" width="26" height="23" viewBox="58 11 26 23">
<rect x="60" y="13.2" width="21.5" height="18.8" rx="1" fill="#fff" stroke="#222" stroke-width="1.6"/>
<rect x="60" y="12.6" width="21.5" height="2" fill="#222"/>
<rect x="63.5" y="18" width="2" height="2" fill="#111"/><rect x="67.5" y="18.2" width="10" height="1.8" fill="#111"/>
<rect x="63.5" y="22" width="2" height="2" fill="#111"/><rect x="67.5" y="22.2" width="10" height="1.8" fill="#111"/>
<rect x="63.5" y="26" width="2" height="2" fill="#111"/><rect x="67.5" y="26.2" width="10" height="1.8" fill="#111"/>
</svg>
<div id="title">Tremendous Jarv</div>

<!-- header right -->
<div style="position:absolute;left:981px;top:0;width:49px;height:48px;background:#4f90e0"></div>
<svg style="position:absolute;left:981px;top:0" width="49" height="47" viewBox="981 0 49 47">
<g fill="#fff">
<rect x="993" y="12" width="7.6" height="7.6" rx="1.2"/><rect x="1001.7" y="12" width="7.6" height="7.6" rx="0.3"/><rect x="1010.4" y="12" width="7.6" height="7.6" rx="1.2"/>
<rect x="993" y="20.7" width="7.6" height="7.6" rx="0.3"/><rect x="1001.7" y="20.7" width="7.6" height="7.6" rx="0.3"/><rect x="1010.4" y="20.7" width="7.6" height="7.6" rx="0.3"/>
<rect x="993" y="29.4" width="7.6" height="7.6" rx="1.2"/><rect x="1001.7" y="29.4" width="7.6" height="7.6" rx="0.3"/><rect x="1010.4" y="29.4" width="7.6" height="7.6" rx="1.2"/>
</g>
</svg>
<div class="hsep" style="left:1080px"></div>
<div class="hsep" style="left:1130px"></div>
<div class="hsep" style="left:1180px"></div>
<div class="hsep" style="left:1230px"></div>
<svg style="position:absolute;left:1030px;top:0" width="250" height="47" viewBox="1030 0 250 47">
<!-- apple -->
<g fill="none" stroke="#2c4760" stroke-linecap="round" stroke-linejoin="round">
<path d="M1050.8,21.2 C1052,19 1054.4,17.3 1058.7,16.5 C1061,16.3 1064.5,19 1065.7,21.2 C1067,24 1067.4,28 1067.25,31.3 C1067,33 1065.5,34 1064.1,34.9 C1063,36 1062,37.3 1061,37.6 C1059.5,38.4 1058.5,38.6 1057.1,38.4 C1055,38 1053,37.5 1051.6,36.8 C1049.5,35.8 1048,35 1047,33.7 C1045.8,32 1045,30.5 1045,29 C1045,27.5 1045.4,26 1046.2,25.1 C1047,24 1048,23.3 1048.9,22.75 Z" stroke-width="2.7"/>
<path d="M1056.7,22.4 C1058,22.6 1060,24 1061,25.9" stroke-width="1.9"/>
<path d="M1044.2,19.2 L1046.9,19.2 L1049.7,20.4" stroke-width="1.6"/>
<path d="M1055.3,6.6 V13.2 M1061,7.4 V14 M1066.6,11.3 V19.3" stroke-width="2"/>
</g>
<path d="M1048.9,10.2 C1050.6,11.5 1051.5,13.5 1050.8,15.8 C1050.2,17.4 1049,18.3 1047.7,18.5 C1046.2,17.5 1045.5,16 1045.8,14.5 C1046.2,12.5 1047.5,11 1048.9,10.2 Z" fill="#2c4760"/>
<!-- pickaxe -->
<g fill="#1f3a57">
<rect x="1095.80" y="9.60" width="2.45" height="2.45"/>
<rect x="1098.25" y="9.60" width="2.45" height="2.45"/>
<rect x="1100.70" y="9.60" width="2.45" height="2.45"/>
<rect x="1103.15" y="9.60" width="2.45" height="2.45"/>
<rect x="1093.35" y="12.05" width="2.45" height="2.45"/>
<rect x="1105.60" y="12.05" width="2.45" height="2.45"/>
<rect x="1108.05" y="12.05" width="2.45" height="2.45"/>
<rect x="1095.80" y="14.50" width="2.45" height="2.45"/>
<rect x="1098.25" y="14.50" width="2.45" height="2.45"/>
<rect x="1100.70" y="14.50" width="2.45" height="2.45"/>
<rect x="1110.50" y="14.50" width="2.45" height="2.45"/>
<rect x="1112.95" y="14.50" width="2.45" height="2.45"/>
<rect x="1103.15" y="16.95" width="2.45" height="2.45"/>
<rect x="1110.50" y="16.95" width="2.45" height="2.45"/>
<rect x="1112.95" y="16.95" width="2.45" height="2.45"/>
<rect x="1105.60" y="19.40" width="2.45" height="2.45"/>
<rect x="1115.40" y="19.40" width="2.45" height="2.45"/>
<rect x="1103.15" y="21.85" width="2.45" height="2.45"/>
<rect x="1105.60" y="21.85" width="2.45" height="2.45"/>
<rect x="1108.05" y="21.85" width="2.45" height="2.45"/>
<rect x="1115.40" y="21.85" width="2.45" height="2.45"/>
<rect x="1100.70" y="24.30" width="2.45" height="2.45"/>
<rect x="1105.60" y="24.30" width="2.45" height="2.45"/>
<rect x="1110.50" y="24.30" width="2.45" height="2.45"/>
<rect x="1117.85" y="24.30" width="2.45" height="2.45"/>
<rect x="1098.25" y="26.75" width="2.45" height="2.45"/>
<rect x="1103.15" y="26.75" width="2.45" height="2.45"/>
<rect x="1112.95" y="26.75" width="2.45" height="2.45"/>
<rect x="1117.85" y="26.75" width="2.45" height="2.45"/>
<rect x="1095.80" y="29.20" width="2.45" height="2.45"/>
<rect x="1100.70" y="29.20" width="2.45" height="2.45"/>
<rect x="1112.95" y="29.20" width="2.45" height="2.45"/>
<rect x="1117.85" y="29.20" width="2.45" height="2.45"/>
<rect x="1093.35" y="31.65" width="2.45" height="2.45"/>
<rect x="1098.25" y="31.65" width="2.45" height="2.45"/>
<rect x="1112.95" y="31.65" width="2.45" height="2.45"/>
<rect x="1117.85" y="31.65" width="2.45" height="2.45"/>
<rect x="1090.90" y="34.10" width="2.45" height="2.45"/>
<rect x="1095.80" y="34.10" width="2.45" height="2.45"/>
<rect x="1115.40" y="34.10" width="2.45" height="2.45"/>
<rect x="1090.90" y="36.55" width="2.45" height="2.45"/>
<rect x="1093.35" y="36.55" width="2.45" height="2.45"/>
</g>
<!-- brick -->
<path d="M1142,20 Q1142,19 1143,19 L1146.2,19 L1146.2,15.5 Q1146.2,14.7 1147,14.7 L1152.1,14.7 Q1152.9,14.7 1152.9,15.5 L1152.9,19 L1157.2,19 L1157.2,15.5 Q1157.2,14.7 1158,14.7 L1163.2,14.7 Q1164,14.7 1164,15.5 L1164,19 L1166.7,19 Q1167.7,19 1167.7,20 L1167.7,34 L1142,34 Z" fill="#2c4760"/>
<!-- user plus -->
<g fill="none" stroke="#2c4760" stroke-width="1.4">
<circle cx="1205.4" cy="17.6" r="6.4"/>
<path d="M1195.2,39.8 L1195.2,35 C1195.2,29 1200,25.5 1205.4,25.5 C1209,25.5 1212,27 1214,30" />
<path d="M1195.2,39.8 L1210.5,39.8"/>
</g>
<circle cx="1219.7" cy="38.4" r="6.5" fill="#2c4760"/>
<path d="M1219.7,34.5 V42.3 M1215.8,38.4 H1223.6" stroke="#fff" stroke-width="1.5"/>
<!-- avatar -->
<defs><clipPath id="av"><circle cx="1255.4" cy="23.1" r="22.4"/></clipPath></defs>
<circle cx="1255.4" cy="23.1" r="22.4" fill="#3f80dd"/>
<g clip-path="url(#av)" fill="#e6eef9">
<circle cx="1255.4" cy="19" r="10.2"/>
<ellipse cx="1255.4" cy="45" rx="13.5" ry="15"/>
</g>
</svg>

<div id="tb"></div>
<div class="sep" style="left:192px"></div>
<div class="sep" style="left:289px"></div>
<div class="sep" style="left:682px"></div>
<div class="sep" style="left:755px"></div>
<div class="sep" style="left:852px"></div>
<div class="sep" style="left:997px"></div>
<svg style="position:absolute;left:0;top:48px" width="1000" height="47" viewBox="0 48 1000 47">
<g fill="none" stroke="#c6d4df" stroke-width="1.5">
<rect x="12.4" y="60.4" width="17" height="17"/>
<rect x="18.6" y="66.6" width="17.2" height="17" fill="#f0f0f0"/>
<path d="M64.5,62.6 H60.6 V83.4 H76.4 V62.6 H72.5"/>
<path d="M64.5,65.2 V62.2 H66.8 Q66.8,59.8 68.5,59.8 Q70.2,59.8 70.2,62.2 H72.5 V65.2 Z"/>
<rect x="69.8" y="68.4" width="11.4" height="11.6" fill="#f0f0f0"/>
<path d="M108.5,79 L109.5,85.4 L123.2,82.5 L123,79 M112,80.5 L127,80" stroke-width="1.3"/>
<rect x="158.5" y="62" width="19" height="22.6" rx="3.5" stroke-width="1.8"/>
<path d="M216.6,70.3 C222,70 227,72 227.5,76.5" stroke-width="3"/>
<path d="M254,76.5 C255,71.5 260,70.8 267,70.7" stroke-width="3.2"/>
<path d="M266.6,64.8 L275.5,71.25 L266.6,77.7 Z" fill="#c6d4df" stroke="none"/>
</g>
<!-- bulb -->
<g fill="none" stroke="#c3d1dc" stroke-width="1.6">
<path d="M700,79 C700,76 695.5,73.5 695.5,68 C695.5,63 699.5,59.5 704,59.5 C708.5,59.5 712.5,63 712.5,68 C712.5,73.5 708,76 708,79 Z"/>
<path d="M700.5,81.5 H707.5 M701.5,84 H706.5"/>
<path d="M699,67 C699,64.5 700.5,63 702.5,62.5" stroke-width="1"/>
</g>
<rect x="725.3" y="61" width="1" height="21" fill="#ccd7df"/>
<path d="M735,69 H745 L740,75 Z" fill="#1f2b36"/>
<!-- group -->
<g fill="none" stroke="#c3d1dc" stroke-width="1.8">
<path d="M768.5,61.5 H786 C788.5,61.5 787.5,65 790,66.5 C793,68 794,71 794,74 C794,79.5 790,83 785,83 C781,83 778,80 776.5,79.5 L768.5,79.5 Z"/>
</g>
<g fill="none" stroke="#c3d1dc" stroke-width="1.8">
<rect x="817" y="61.5" width="19" height="18"/>
<circle cx="830.5" cy="75" r="9" fill="#f0f0f0"/>
</g>
<g fill="none" stroke="#c3d1dc" stroke-width="1.8">
<path d="M868.2,58.5 V84"/>
<rect x="873" y="63.3" width="14.5" height="6"/>
</g>
<rect x="873" y="73" width="10" height="6.5" fill="#cbd8e2" stroke="#c3d1dc" stroke-width="1.5"/>
<g fill="none" stroke="#c3d1dc" stroke-width="1.8">
<path d="M925,57 V86"/>
<path d="M920.5,63 V81 H910 Z" stroke-width="1.2"/>
<path d="M929.5,63 V81 H938 Z"/>
</g>
<g fill="none" stroke="#c3d1dc" stroke-width="2.4" stroke-linecap="round">
<path d="M964,80 L961,72 C959,66 962,61 967,59.5 C972,58 976,61 978,66 L980.5,73"/>
<path d="M969.5,78 L967,71.5 C966.5,69.5 967.5,68 969,67.5 C970.5,67 972,68 972.5,69.5 L975,76"/>
</g>
<path d="M959,86 Q966,82 975,84 Q980,85 984,88" fill="none" stroke="#c3d1dc" stroke-width="1.5" stroke-dasharray="2,2"/>
</svg>
<div class="btn" style="left:1010px;width:80px">Import</div>
<div class="btn" style="left:1098px;width:80px">Export</div>
<div class="btn" style="left:1186px;width:80px">Send To</div>

<div id="tiparrow"></div>
<div id="tip">Change name</div>

<div id="strip"></div>
<div id="tab"><svg width="17" height="45" style="position:absolute;left:-1px;top:-1px"><path d="M11.2,12.3 L5.6,23.2 L11.2,33.4" fill="none" stroke="#555" stroke-width="1.5"/></svg></div>
<div id="settings">Settings</div>
<div id="snaplbl">Snap Grid</div>
<div id="snap"><span style="position:absolute;left:7px;top:0">1.0 mm</span><svg style="position:absolute;left:55px;top:7px" width="8" height="6"><path d="M0.5,5 L4,1 L7.5,5 Z" fill="#333"/></svg></div>
</body></html>
